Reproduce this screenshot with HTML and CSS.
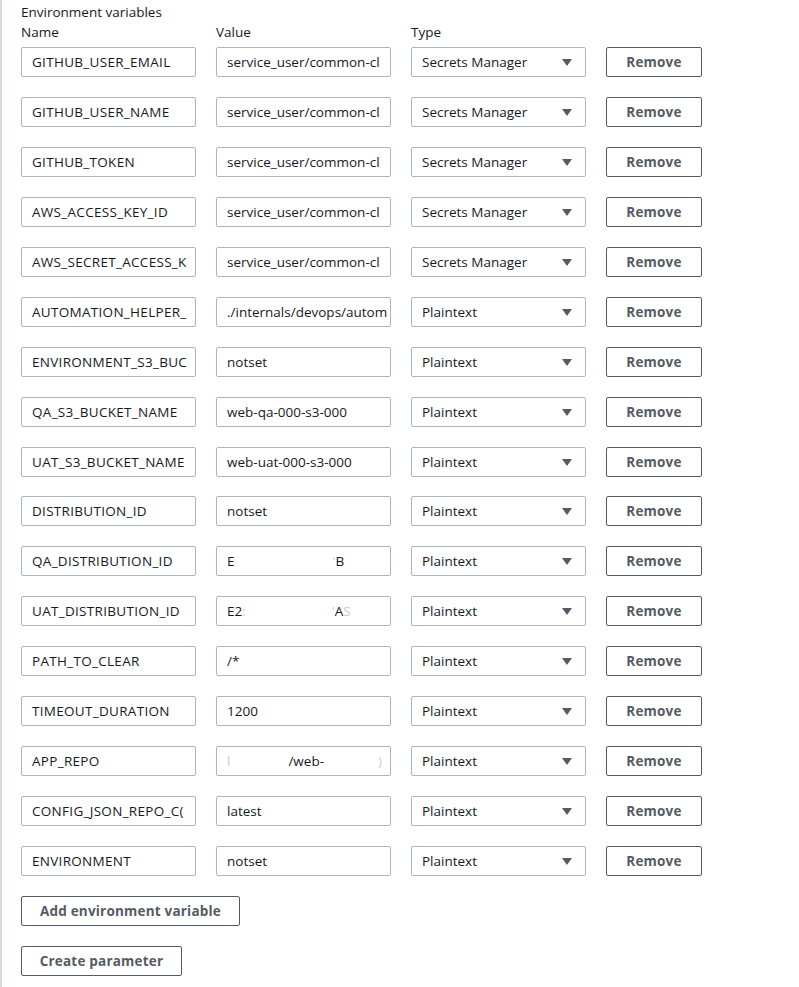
FILE: index.html
```html
<!DOCTYPE html>
<html>
<head>
<meta charset="utf-8">
<link rel="stylesheet" href="styles.css">
</head>
<body>
<div class="page">
  <div class="title">Environment variables</div>
  <div class="heads">
    <div>Name</div><div>Value</div><div>Type</div>
  </div>
  <div class="rows">
    <div class="row"><div class="field name">GITHUB_USER_EMAIL</div><div class="field">service_user/common-cl</div><div class="field select">Secrets Manager<span class="caret"></span></div><button class="btn">Remove</button></div>
    <div class="row"><div class="field name">GITHUB_USER_NAME</div><div class="field">service_user/common-cl</div><div class="field select">Secrets Manager<span class="caret"></span></div><button class="btn">Remove</button></div>
    <div class="row"><div class="field name">GITHUB_TOKEN</div><div class="field">service_user/common-cl</div><div class="field select">Secrets Manager<span class="caret"></span></div><button class="btn">Remove</button></div>
    <div class="row"><div class="field name">AWS_ACCESS_KEY_ID</div><div class="field">service_user/common-cl</div><div class="field select">Secrets Manager<span class="caret"></span></div><button class="btn">Remove</button></div>
    <div class="row"><div class="field name">AWS_SECRET_ACCESS_K</div><div class="field">service_user/common-cl</div><div class="field select">Secrets Manager<span class="caret"></span></div><button class="btn">Remove</button></div>
    <div class="row"><div class="field name">AUTOMATION_HELPER_</div><div class="field">./internals/devops/autom</div><div class="field select">Plaintext<span class="caret"></span></div><button class="btn">Remove</button></div>
    <div class="row"><div class="field name">ENVIRONMENT_S3_BUC</div><div class="field">notset</div><div class="field select">Plaintext<span class="caret"></span></div><button class="btn">Remove</button></div>
    <div class="row"><div class="field name">QA_S3_BUCKET_NAME</div><div class="field">web-qa-000-s3-000</div><div class="field select">Plaintext<span class="caret"></span></div><button class="btn">Remove</button></div>
    <div class="row"><div class="field name">UAT_S3_BUCKET_NAME</div><div class="field">web-uat-000-s3-000</div><div class="field select">Plaintext<span class="caret"></span></div><button class="btn">Remove</button></div>
    <div class="row"><div class="field name">DISTRIBUTION_ID</div><div class="field">notset</div><div class="field select">Plaintext<span class="caret"></span></div><button class="btn">Remove</button></div>
    <div class="row"><div class="field name">QA_DISTRIBUTION_ID</div><div class="field redact">E<span class="gap g1"></span><span class="faint">'</span>B</div><div class="field select">Plaintext<span class="caret"></span></div><button class="btn">Remove</button></div>
    <div class="row"><div class="field name">UAT_DISTRIBUTION_ID</div><div class="field redact">E2<span class="faint">:</span><span class="gap g2"></span><span class="faint">'</span>A<span class="faint">S</span></div><div class="field select">Plaintext<span class="caret"></span></div><button class="btn">Remove</button></div>
    <div class="row"><div class="field name">PATH_TO_CLEAR</div><div class="field">/*</div><div class="field select">Plaintext<span class="caret"></span></div><button class="btn">Remove</button></div>
    <div class="row"><div class="field name">TIMEOUT_DURATION</div><div class="field">1200</div><div class="field select">Plaintext<span class="caret"></span></div><button class="btn">Remove</button></div>
    <div class="row"><div class="field name">APP_REPO</div><div class="field redact"><span class="faint">l</span><span class="gap g3"></span>/web-<span class="gap g4"></span><span class="faint">)</span></div><div class="field select">Plaintext<span class="caret"></span></div><button class="btn">Remove</button></div>
    <div class="row"><div class="field name">CONFIG_JSON_REPO_C(</div><div class="field">latest</div><div class="field select">Plaintext<span class="caret"></span></div><button class="btn">Remove</button></div>
    <div class="row"><div class="field name">ENVIRONMENT</div><div class="field">notset</div><div class="field select">Plaintext<span class="caret"></span></div><button class="btn">Remove</button></div>
  </div>
  <div class="actions">
    <button class="btn wide-add">Add environment variable</button>
    <button class="btn wide-create">Create parameter</button>
  </div>
</div>
</body>
</html>
```
FILE: styles.css
```css
html, body {
  margin: 0;
  padding: 0;
  background: #ffffff;
}
body {
  font-family: "Open Sans", "Noto Sans", sans-serif;
  font-size: 13.5px;
  color: #16191f;
  height: 987px;
  overflow: hidden;
}
.page {
  border-left: 2px solid #d5dbdb;
  padding-left: 19px;
  min-height: 987px;
  box-sizing: border-box;
}
.title {
  padding-top: 2px;
  line-height: 20px;
}
.heads {
  display: grid;
  grid-template-columns: 175px 175px 175px;
  column-gap: 20px;
  line-height: 20px;
  margin-bottom: 5px;
}
.rows {
  display: flex;
  flex-direction: column;
  gap: 19.94px;
}
.row {
  display: grid;
  grid-template-columns: 175px 175px 175px 96px;
  column-gap: 20px;
  height: 30px;
}
.field {
  box-sizing: border-box;
  height: 30px;
  border: 1px solid #aab7b8;
  border-radius: 2px;
  padding: 0 9px 0 10px;
  line-height: 28px;
  white-space: nowrap;
  overflow: hidden;
  background: #fff;
}
.field.name {
  letter-spacing: 0.3px;
}
.select {
  position: relative;
}
.caret {
  position: absolute;
  right: 13px;
  top: 11px;
  width: 0;
  height: 0;
  border-left: 5px solid transparent;
  border-right: 5px solid transparent;
  border-top: 7px solid #545b64;
}
.btn {
  box-sizing: border-box;
  height: 30px;
  border: 1px solid #545b64;
  border-radius: 2px;
  background: #fff;
  color: #545b64;
  font-family: "Open Sans", "Noto Sans", sans-serif;
  font-weight: 700;
  font-size: 13.5px;
  letter-spacing: 0.2px;
  padding: 0;
  cursor: pointer;
}
.redact {
  white-space: pre;
}
.gap {
  display: inline-block;
}
.g1 { width: 98px; }
.g2 { width: 86px; }
.g3 { width: 58px; }
.g4 { width: 54px; }
.faint { color: #c8cccc; }
.actions {
  display: flex;
  flex-direction: column;
  align-items: flex-start;
  gap: 20px;
  margin-top: 20px;
}
.wide-add { width: 219px; }
.wide-create { width: 161px; }
```
